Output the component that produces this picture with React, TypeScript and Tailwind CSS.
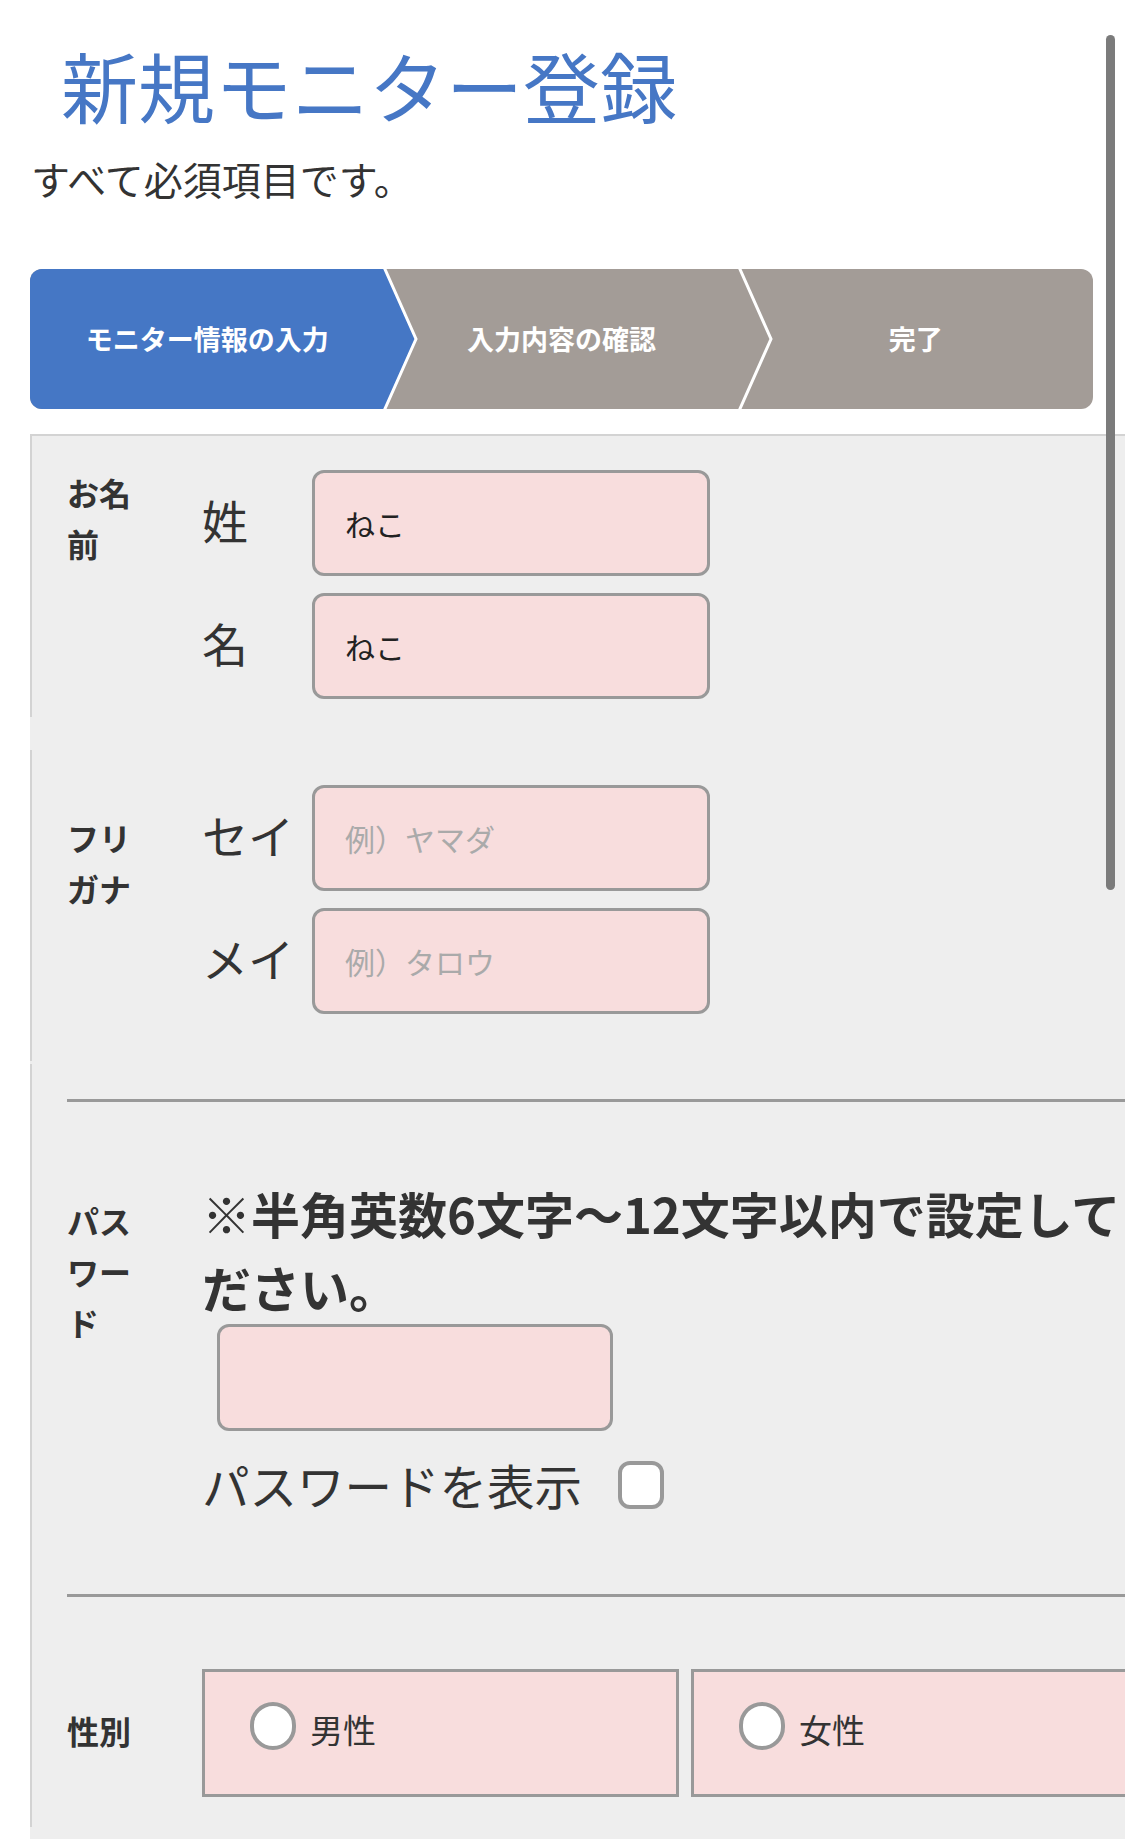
import React from 'react';

function TextBox({ value, placeholder }: { value?: string; placeholder?: string }) {
  return (
    <input
      type="text"
      defaultValue={value}
      placeholder={placeholder}
      className="h-[106px] w-[398px] rounded-[12px] border-[3px] border-[#999] bg-[#f8dddd] pl-[30px] text-[30px] text-[#222] outline-none placeholder:text-[#aaa]"
    />
  );
}

function SubRow({ label, value, placeholder }: { label: string; value?: string; placeholder?: string }) {
  return (
    <div className="flex items-center">
      <span className="w-[110px] pb-[8px] text-[46px] leading-none text-[#333]">{label}</span>
      <TextBox value={value} placeholder={placeholder} />
    </div>
  );
}

function Steps() {
  return (
    <div className="ml-[30px] mt-[71px] grid h-[140px] w-[1063px] grid-cols-3">
      <svg className="col-span-3 col-start-1 row-start-1 h-full w-full" viewBox="0 0 1063 140">
        <defs>
          <clipPath id="bar">
            <rect width="1063" height="140" rx="12" />
          </clipPath>
        </defs>
        <g clipPath="url(#bar)">
          <rect width="1063" height="140" fill="#a39c97" />
          <path d="M0 0H354L386 70L354 140H0Z" fill="#4577c5" />
          <path d="M354 -2L386 70L354 142" fill="none" stroke="#fff" strokeWidth="3" />
          <path d="M709 -2L741 70L709 142" fill="none" stroke="#fff" strokeWidth="3" />
        </g>
      </svg>
      <div className="col-start-1 row-start-1 flex items-center justify-center text-[27px] font-bold text-white">
        モニター情報の入力
      </div>
      <div className="col-start-2 row-start-1 flex items-center justify-center text-[27px] font-bold text-white">
        入力内容の確認
      </div>
      <div className="col-start-3 row-start-1 flex items-center justify-center text-[27px] font-bold text-white">
        完了
      </div>
    </div>
  );
}

function GenderBox({ label }: { label: string }) {
  return (
    <label className="flex h-[128px] w-[477px] items-center border-[3px] border-[#999] bg-[#f8dddd] pl-[45px]">
      <input
        type="radio"
        name="sex"
        className="mb-[14px] h-[48px] w-[46px] appearance-none rounded-full border-4 border-[#999] bg-white"
      />
      <span className="mb-[6px] ml-[14px] text-[33px] text-[#333]">{label}</span>
    </label>
  );
}

export default function App() {
  return (
    <div className="relative h-[1839px] w-[1125px] overflow-hidden bg-white pt-[46px] font-[family-name:'Noto_Sans_CJK_JP','Noto_Sans_CJK_SC',sans-serif]">
      <h1 className="ml-[61px] text-[77px] font-normal leading-none text-[#4677c5]">新規モニター登録</h1>
      <p className="ml-[31px] mt-[36px] text-[39px] leading-none text-[#333]">すべて必須項目です。</p>

      <Steps />

      {/* form */}
      <div className="ml-[30px] mt-[25px] w-[1200px] border-t-2 border-[#d3d3d3] bg-[#eee] pb-[40px]">
        {/* お名前 */}
        <div className="flex border-l-2 border-[#d3d3d3] pb-[18px] pt-[34px]">
          <div className="-mt-[3px] ml-[35px] w-[135px] text-[32px] font-bold leading-[51px] text-[#333]">
            <p className="w-[70px]">お名前</p>
          </div>
          <div className="flex flex-col gap-[17px]">
            <SubRow label="姓" value="ねこ" />
            <SubRow label="名" value="ねこ" />
          </div>
        </div>

        {/* フリガナ */}
        <div className="mt-[33px] flex border-l-2 border-[#d3d3d3] pb-[47px] pt-[35px]">
          <div className="ml-[35px] mt-[27px] w-[135px] text-[32px] font-bold leading-[51px] text-[#333]">
            <p className="w-[70px]">フリガナ</p>
          </div>
          <div className="flex flex-col gap-[17px]">
            <SubRow label="セイ" placeholder="例）ヤマダ" />
            <SubRow label="メイ" placeholder="例）タロウ" />
          </div>
        </div>

        <div className="mt-[3px] border-l-2 border-[#d3d3d3] pb-[30px] pt-[35px]">
          {/* パスワード */}
          <div className="ml-[35px] flex border-t-[3px] border-[#999] pb-[79px] pt-[74px]">
            <div className="w-[135px] pt-[19px] text-[32px] font-bold leading-[51px] text-[#333]">
              <p className="w-[70px]">パスワード</p>
            </div>
            <div>
              <p className="w-[990px] text-[49px] font-bold leading-[74px] text-[#333]">
                ※半角英数6文字〜12文字以内で設定してください。
              </p>
              <input
                type="password"
                className="ml-[15px] block h-[107px] w-[396px] rounded-[12px] border-[3px] border-[#999] bg-[#f8dddd] px-[30px] text-[30px] outline-none"
              />
              <label className="mt-[24px] flex h-[60px] items-center">
                <span className="text-[47.5px] leading-none text-[#333]">パスワードを表示</span>
                <input
                  type="checkbox"
                  className="ml-[36px] h-[48px] w-[46px] appearance-none rounded-[12px] border-4 border-[#999] bg-white"
                />
              </label>
            </div>
          </div>

          {/* 性別 */}
          <div className="ml-[35px] flex items-center border-t-[3px] border-[#999] pt-[72px]">
            <p className="mb-[6px] w-[135px] text-[32px] font-bold text-[#333]">性別</p>
            <div className="flex gap-[12px]">
              <GenderBox label="男性" />
              <GenderBox label="女性" />
            </div>
          </div>
        </div>
      </div>

      {/* overlay scrollbar */}
      <div className="absolute left-[1106px] top-[35px] h-[855px] w-[9px] rounded-full bg-[#7b7b7b]" />
    </div>
  );
}
